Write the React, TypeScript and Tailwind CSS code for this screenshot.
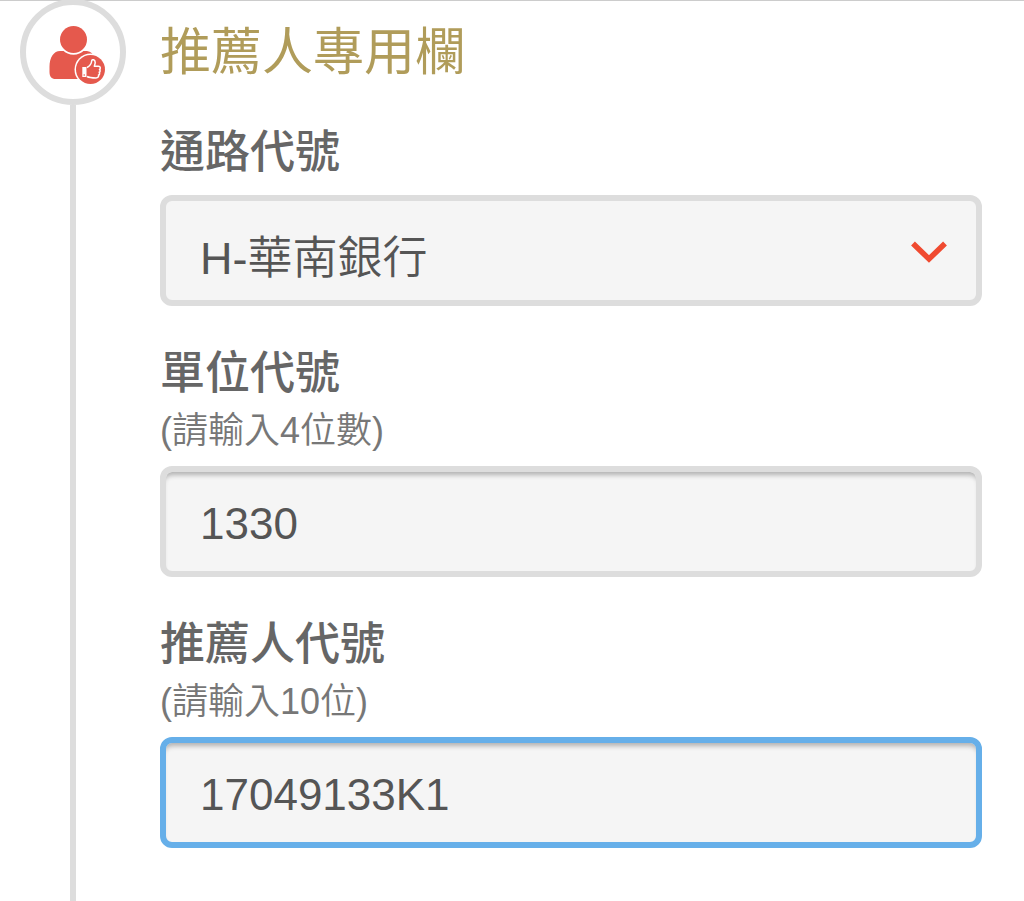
import { useState } from "react";

const channels = ["H-華南銀行"];

const fieldClass =
  "block h-[111px] w-full rounded-xl border-[6px] bg-[#f5f5f5] px-[34px] text-[#555] outline-none";

const inputClass = `${fieldClass} pt-1 text-[44px] shadow-[inset_0_6px_5px_-3px_rgba(0,0,0,0.28)]`;

function ReferrerIcon() {
  return (
    <svg viewBox="-8 -8 68 68" className="size-[68px]" aria-hidden="true">
      <path
        d="M13 25 C7 25 2.500 31 2.500 41 V46 C2.500 50.500 4.500 53 8.500 53 H37 V25 Z M37 25 H40 C44 25.500 46 27.500 47 31 L37 39 Z"
        fill="#e5594d"
      />
      <circle cx="26.500" cy="13.500" r="15.200" fill="#fff" />
      <circle cx="26.500" cy="13.500" r="13.500" fill="#e5594d" />
      <circle cx="43.500" cy="43.500" r="16" fill="#fff" />
      <circle cx="43.500" cy="43.500" r="14.500" fill="#e5594d" />
      <path d="M35.300 41 H39.500 V51 H35.300 Z" fill="#fff" />
      <circle cx="37.200" cy="49" r="0.800" fill="#e5594d" />
      <path
        d="M40 41.500 C43 40 44.500 37.500 44.800 34.500 C45.200 33 48.200 33.500 48.200 36.500 C48.200 38 47.500 39.300 47.300 40.200 H51.500 C53.700 40.200 53.700 43 52.500 43.400 C53.500 44.200 53.200 46 52.200 46.300 C53 47.200 52.500 48.900 51.500 49.100 C52 50.500 51 51.900 49 51.900 C45.500 51.900 42.500 51.900 40 50.500"
        fill="none"
        stroke="#fff"
        strokeWidth="1.500"
        strokeLinejoin="round"
      />
    </svg>
  );
}

function Label({ id, text, hint }: { id: string; text: string; hint?: string }) {
  return (
    <label htmlFor={id} className="mb-2.5 block">
      <span className="block text-[45px] leading-[64px] font-medium text-[#666]">{text}</span>
      {hint && <span className="block text-[36px] leading-[50px] font-[350] text-[#777]">{hint}</span>}
    </label>
  );
}

export default function App() {
  const [channel, setChannel] = useState(channels[0]);
  const [unitCode, setUnitCode] = useState("1330");
  const [referrerCode, setReferrerCode] = useState("17049133K1");

  return (
    <main className="flex min-h-screen border-t border-[#ccc] bg-white pr-[42px] pl-5 font-['Liberation_Sans','Noto_Sans_CJK_TC',sans-serif]">
      <div className="-mt-0.5 mr-[34px] flex shrink-0 flex-col items-center">
        <div className="flex size-[106px] items-center justify-center rounded-full border-[6px] border-[#ddd] bg-white">
          <ReferrerIcon />
        </div>
        <div className="w-1.5 flex-1 bg-[#ddd]" />
      </div>

      <form className="min-w-0 flex-1 pt-3 pb-8" onSubmit={e => e.preventDefault()}>
        <h2 className="mb-7 text-[51px] leading-[80px] font-normal text-[#b09c5a]">推薦人專用欄</h2>

        <div className="space-y-9">
          <div>
            <Label id="channel" text="通路代號" />
            <div className="relative">
              <select
                id="channel"
                value={channel}
                onChange={e => setChannel(e.target.value)}
                className={`${fieldClass} appearance-none border-[#ddd] pt-4 text-[45px] font-[350]`}
              >
                {channels.map(c => (
                  <option key={c} value={c}>{c}</option>
                ))}
              </select>
              <svg
                viewBox="0 0 36 22"
                className="pointer-events-none absolute top-[46px] right-[35px] h-[22px] w-9"
                aria-hidden="true"
              >
                <path d="M2 2.500 L18 18 L34 2.500" fill="none" stroke="#f04a30" strokeWidth="5.500" />
              </svg>
            </div>
          </div>

          <div>
            <Label id="unit" text="單位代號" hint="(請輸入4位數)" />
            <input
              id="unit"
              type="text"
              maxLength={4}
              value={unitCode}
              onChange={e => setUnitCode(e.target.value)}
              className={`${inputClass} border-[#ddd]`}
            />
          </div>

          <div>
            <Label id="referrer" text="推薦人代號" hint="(請輸入10位)" />
            <input
              id="referrer"
              type="text"
              maxLength={10}
              value={referrerCode}
              onChange={e => setReferrerCode(e.target.value)}
              className={`${inputClass} border-[#66afe9]`}
            />
          </div>
        </div>
      </form>
    </main>
  );
}
